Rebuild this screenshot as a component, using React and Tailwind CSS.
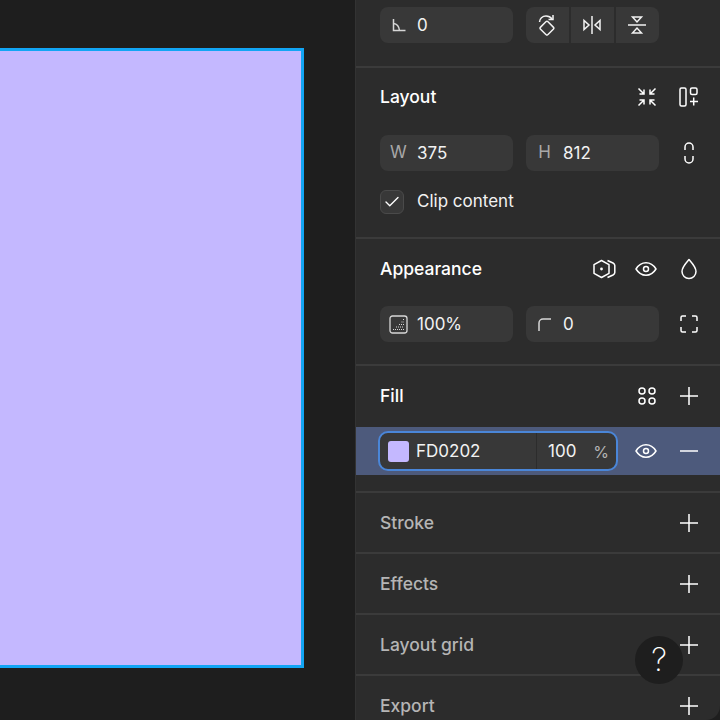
import { Check } from "lucide-react";

function AngleIcon() {
  return (
    <svg width="14" height="14" viewBox="0 0 14 14" fill="none" stroke="currentColor" strokeWidth="1.5">
      <path d="M1.5 1v11.5h12" />
      <path d="M1.5 5.5c3 .3 5.5 3 6 7" />
    </svg>
  );
}

function RotateIcon() {
  return (
    <svg width="18" height="22" viewBox="0 0 18 22" fill="none" stroke="currentColor" strokeWidth="1.5">
      <path d="M1.5 8c0-3.500 3-6 6.500-6 2.500 0 4.500 1 6 3" />
      <path d="M15 1v4.500h-4.500" />
      <rect x="3.700" y="9" width="10.500" height="10.500" rx="1.500" transform="rotate(45 9 14.200)" />
    </svg>
  );
}

function FlipH() {
  return (
    <svg width="20" height="20" viewBox="0 0 20 20" fill="none" stroke="currentColor" strokeWidth="1.5">
      <path d="M10 1v18" />
      <path d="M2 5.500v9l5-4.500z" />
      <path d="M18 5.500v9l-5-4.500z" />
    </svg>
  );
}

function FlipV() {
  return (
    <svg width="20" height="20" viewBox="0 0 20 20" fill="none" stroke="currentColor" strokeWidth="1.5">
      <path d="M1 10h18" />
      <path d="M5.500 2h9L10 7z" />
      <path d="M5.500 18h9L10 13z" />
    </svg>
  );
}

function CollapseIcon() {
  return (
    <svg width="20" height="20" viewBox="0 0 20 20" fill="none" stroke="currentColor" strokeWidth="1.500">
      <path d="M1.500 1.500L7 7M2.500 7H7V2.500" />
      <path d="M18.500 1.500L13 7M17.500 7H13V2.500" />
      <path d="M1.500 18.500L7 13M2.500 13H7v4.500" />
      <path d="M18.500 18.500L13 13M17.500 13H13v4.500" />
    </svg>
  );
}

function AutoLayoutIcon() {
  return (
    <svg width="20" height="20" viewBox="0 0 20 20" fill="none" stroke="currentColor" strokeWidth="1.500">
      <rect x="1" y="1" width="6" height="18" rx="1.500" />
      <rect x="11.500" y="1" width="6.500" height="6.500" rx="1.500" />
      <path d="M14.700 10.500v8M11 14.500h8" />
    </svg>
  );
}

function LinkIcon() {
  return (
    <svg width="12" height="22" viewBox="0 0 12 22" fill="none" stroke="currentColor" strokeWidth="1.500">
      <path d="M2 8V5a4 4 0 0 1 8 0v3" />
      <path d="M2 14v3a4 4 0 0 0 8 0v-3" />
    </svg>
  );
}

function ComponentIcon() {
  return (
    <svg width="24" height="20" viewBox="0 0 24 20" fill="none" stroke="currentColor" strokeWidth="1.500">
      <path d="M9.500 1.500l7.500 4.200v8.600l-7.500 4.200L2 14.300V5.700z" strokeLinejoin="round" />
      <circle cx="9.500" cy="10" r="1.400" fill="currentColor" stroke="none" />
      <path d="M15.500 1.500l5.500 2.500q1.800 1 1.800 2.500v7q0 1.500-1.800 2.500l-5.500 2.500" />
    </svg>
  );
}

function EyeIcon() {
  return (
    <svg width="24" height="20" viewBox="0 0 24 20" fill="none" stroke="currentColor" strokeWidth="1.500">
      <path d="M2 10c2.500-4 6-6.200 10-6.200S19.500 6 22 10c-2.500 4-6 6.200-10 6.200S4.500 14 2 10z" strokeLinejoin="round" />
      <circle cx="12" cy="10" r="2.500" />
    </svg>
  );
}

function DropIcon() {
  return (
    <svg width="20" height="22" viewBox="0 0 20 22" fill="none" stroke="currentColor" strokeWidth="1.500">
      <path d="M10 1.500c3 3.500 7 7.500 7 12a7 7 0 0 1-14 0c0-4.500 4-8.500 7-12z" strokeLinejoin="round" />
    </svg>
  );
}

function PlusIcon() {
  return (
    <svg width="20" height="20" viewBox="0 0 20 20" fill="none" stroke="currentColor" strokeWidth="1.500">
      <path d="M10 1v18M1 10h18" />
    </svg>
  );
}

function MinusIcon() {
  return (
    <svg width="20" height="20" viewBox="0 0 20 20" fill="none" stroke="currentColor" strokeWidth="1.500">
      <path d="M1 10h18" />
    </svg>
  );
}

function OpacityIcon() {
  return (
    <svg width="19" height="19" viewBox="0 0 19 19" fill="none">
      <rect x="1" y="1" width="17" height="17" rx="2.500" stroke="currentColor" strokeWidth="1.300" />
      <path d="M4 14.500h11M7 12h8M10 9.500h5M12.500 7h2.500M14 4.500h1" stroke="currentColor" strokeWidth="1.200" strokeDasharray="1 1" />
    </svg>
  );
}

function CornerIcon() {
  return (
    <svg width="14" height="14" viewBox="0 0 14 14" fill="none" stroke="currentColor" strokeWidth="1.500">
      <path d="M1 14V6a4 4 0 0 1 4-4h8" />
    </svg>
  );
}

function CornersIcon() {
  return (
    <svg width="18" height="18" viewBox="0 0 18 18" fill="none" stroke="currentColor" strokeWidth="1.500">
      <path d="M1 6V2.500A1.500 1.500 0 0 1 2.500 1H6" />
      <path d="M12 1h3.500A1.500 1.500 0 0 1 17 2.500V6" />
      <path d="M17 12v3.500a1.500 1.500 0 0 1-1.500 1.500H12" />
      <path d="M6 17H2.500A1.500 1.500 0 0 1 1 15.500V12" />
    </svg>
  );
}

function StylesIcon() {
  return (
    <svg width="20" height="20" viewBox="0 0 20 20" fill="none" stroke="currentColor" strokeWidth="1.500">
      <circle cx="5" cy="5" r="3" />
      <circle cx="15" cy="5" r="3" />
      <circle cx="5" cy="15" r="3" />
      <circle cx="15" cy="15" r="3" />
    </svg>
  );
}

function Field({ icon, children }) {
  return (
    <div className="flex h-9 w-[133px] items-center rounded-lg bg-[#383838] text-[17px] text-[#f2f2f2]">
      <div className="flex w-[37px] shrink-0 items-center justify-center text-[#d6d6d6]">{icon}</div>
      <span className="pt-px">{children}</span>
    </div>
  );
}

function EmptySection({ title, last }) {
  return (
    <div className={`flex h-[61px] shrink-0 items-center justify-between border-b-2 pl-6 pr-[21px] pt-px ${last ? "border-transparent" : "border-[#3b3b3b]"}`}>
      <span className="text-[17.5px] font-[450] text-[#b5b5b5]">{title}</span>
      <div className="text-white"><PlusIcon /></div>
    </div>
  );
}

export default function App() {
  return (
    <div className="relative flex h-[720px] w-[720px] overflow-hidden bg-[#1e1e1e] font-['Inter',sans-serif]">
      <div className="w-[355px] shrink-0 pt-12">
        <div className="h-[620px] w-[304px] border-y-[3px] border-r-[3px] border-[#12a5f4] bg-[#c4b8ff]" />
      </div>

      <div className="flex flex-1 flex-col rounded-br-[14px] border-l border-[#333333] bg-[#2c2c2c]">
        <div className="h-[68px] shrink-0 border-b-2 border-[#3b3b3b] pl-6 pt-[7px]">
          <div className="flex gap-[13px]">
            <Field icon={<AngleIcon />}>0</Field>
            <div className="flex h-9 w-[133px] items-center divide-x-2 divide-[#2c2c2c] rounded-lg bg-[#383838] text-[#f2f2f2]">
              <div className="flex h-full flex-1 items-center justify-center pr-px"><RotateIcon /></div>
              <div className="flex h-full flex-1 items-center justify-center pr-px"><FlipH /></div>
              <div className="flex h-full flex-1 items-center justify-center pr-px"><FlipV /></div>
            </div>
          </div>
        </div>

        <div className="h-[171px] shrink-0 border-b-2 border-[#3b3b3b] pl-6 pr-[21px] pt-[17px]">
          <div className="flex h-6 items-center justify-between text-white">
            <span className="text-[17.5px] font-[450]">Layout</span>
            <div className="flex items-center gap-[22px]"><CollapseIcon /><AutoLayoutIcon /></div>
          </div>
          <div className="mt-[26px] flex items-center gap-[13px]">
            <Field icon={<span className="text-[17px] text-[#a8a8a8]">W</span>}>375</Field>
            <Field icon={<span className="text-[17px] text-[#a8a8a8]">H</span>}>812</Field>
            <div className="ml-auto flex w-5 justify-center text-white"><LinkIcon /></div>
          </div>
          <div className="mt-[18px] flex items-center gap-[13px]">
            <div className="flex h-6 w-6 items-center justify-center rounded-md border border-[#4a4a4a] bg-[#383838] text-white">
              <Check size={18} strokeWidth={1.8} />
            </div>
            <span className="text-[17px] text-[#f2f2f2]">Clip content</span>
          </div>
        </div>

        <div className="h-[127px] shrink-0 border-b-2 border-[#3b3b3b] pl-6 pr-[21px] pt-[18px]">
          <div className="flex h-6 items-center justify-between text-white">
            <span className="text-[17.5px] font-[450]">Appearance</span>
            <div className="flex items-center">
              <ComponentIcon />
              <div className="ml-[18px]"><EyeIcon /></div>
              <div className="ml-[21px]"><DropIcon /></div>
            </div>
          </div>
          <div className="mt-[25px] flex items-center gap-[13px]">
            <Field icon={<OpacityIcon />}>100%</Field>
            <Field icon={<CornerIcon />}>0</Field>
            <div className="ml-auto flex w-5 justify-center text-white"><CornersIcon /></div>
          </div>
        </div>

        <div className="h-[127px] shrink-0 border-b-2 border-[#3b3b3b] pt-[18px]">
          <div className="flex h-6 items-center justify-between pl-6 pr-[21px] text-white">
            <span className="text-[17.5px] font-[450]">Fill</span>
            <div className="flex items-center gap-[22px]">
              <StylesIcon />
              <PlusIcon />
            </div>
          </div>
          <div className="mt-[19px] flex h-12 items-center bg-[#4d5a7c] pl-[22px] pr-[21px]">
            <div className="flex h-10 w-[240px] items-center rounded-[10px] border-2 border-[#4a86d8] bg-[#383838] text-[17px] text-[#f2f2f2]">
              <div className="ml-2 h-[21px] w-[21px] rounded-[3px] bg-[#c4b8ff]" />
              <span className="ml-[7px] w-[120px] pt-px">FD0202</span>
              <div className="flex h-full flex-1 items-center justify-between border-l border-[#2c2c2c] pl-[11px] pr-[7px] pt-px">
                <span>100</span>
                <span className="text-[16px] text-[#b5b5b5]">%</span>
              </div>
            </div>
            <div className="ml-auto flex items-center gap-[21px] text-white">
              <EyeIcon />
              <MinusIcon />
            </div>
          </div>
        </div>

        <EmptySection title="Stroke" />
        <EmptySection title="Effects" />
        <EmptySection title="Layout grid" />
        <EmptySection title="Export" last />
      </div>

      <div className="absolute left-[635px] top-[636px] flex h-12 w-12 items-center justify-center rounded-full bg-[#1e1e1e] text-[32px] font-extralight text-white">?</div>
    </div>
  );
}
